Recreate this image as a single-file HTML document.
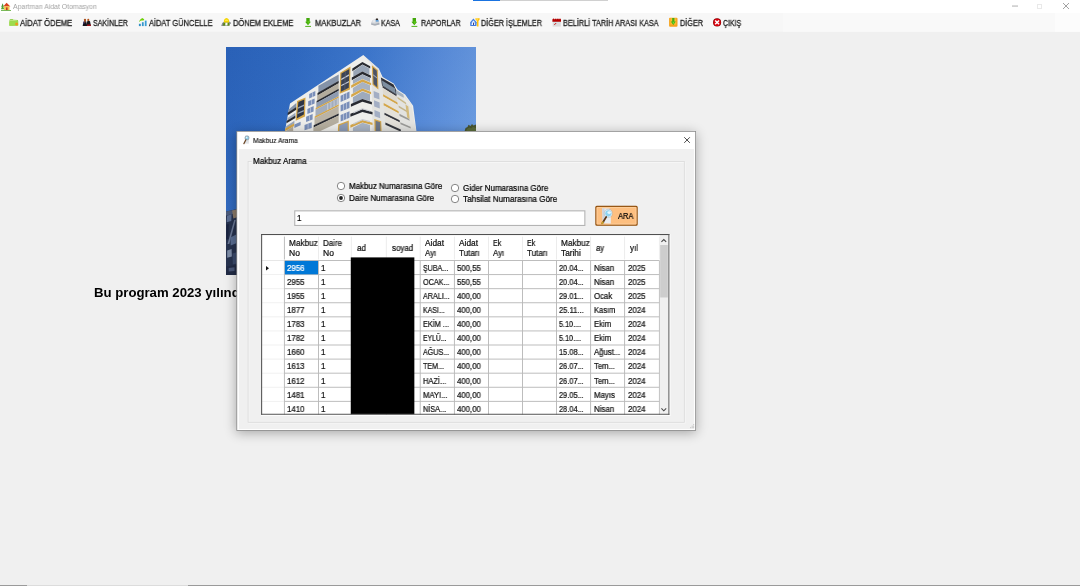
<!DOCTYPE html>
<html><head><meta charset="utf-8"><title>Apartman Aidat Otomasyon</title>
<style>
html,body{margin:0;padding:0;}
body{width:1080px;height:586px;overflow:hidden;background:#f0f0f0;position:relative;font-family:"Liberation Sans",sans-serif;}
.t{position:absolute;white-space:nowrap;transform-origin:0 50%;display:block;will-change:transform;}
.r{position:absolute;}
svg{position:absolute;overflow:visible;}
</style></head><body>
<div class="r" style="left:0.00px;top:0.00px;width:1080.00px;height:13.00px;background:#ffffff;"></div>
<div class="r" style="left:473.00px;top:0.00px;width:27.00px;height:1.00px;background:#1a73e0;"></div>
<div class="r" style="left:500.00px;top:0.00px;width:108.00px;height:1.00px;background:#d0d0d0;"></div>
<svg style="left:0px;top:13px" width="1080" height="19"><rect x="0.00" y="0.00" width="1080.00" height="18.70" fill="#f7f7f7"/></svg>
<svg style="left:783px;top:13px" width="297" height="19"><rect x="0.00" y="0.00" width="297.00" height="18.70" fill="#f9f9f9"/></svg>
<svg style="left:1055px;top:13px" width="25" height="19"><rect x="0.00" y="0.00" width="25.00" height="18.70" fill="#fcfcfc"/></svg>
<svg style="left:1px;top:2px" width="10" height="9" viewBox="0 0 10 9">
<path d="M0.3 5 L1.6 1.2 L2.8 4.6 Z" fill="#3f8f2a"/>
<path d="M0 7.2 L1.6 3 L3.2 7.2 Z" fill="#4ea535"/>
<path d="M2.2 4.6 L5.6 0.8 L9.4 4.6 Z" fill="#d9401e"/>
<rect x="3.1" y="4.3" width="5.4" height="4" fill="#f2c24a"/>
<rect x="5" y="5.4" width="1.6" height="2.9" fill="#c0392b"/>
<rect x="0" y="8" width="10" height="0.9" fill="#6bb34a"/>
</svg>
<span class="t" style="left:13.10px;top:3px;font-size:7.00px;line-height:7px;color:#a3a3a3;transform:scaleX(0.9790);">Apartman Aidat Otomasyon</span>
<svg style="left:1012px;top:5px" width="6" height="2"><rect x="0.00" y="0.60" width="6.00" height="0.90" fill="#a6a6a6"/></svg>
<div class="r" style="left:1037.30px;top:3.60px;width:5.20px;height:5.20px;background:transparent;border:0.7px solid #e9e9e9;box-sizing:border-box;"></div>
<svg style="left:1063px;top:3px" width="6" height="6" viewBox="0 0 6 6"><path d="M0 0L6 6M6 0L0 6" stroke="#8c8c8c" stroke-width="0.8" fill="none"/></svg>
<span class="t" style="left:20.10px;top:18px;font-size:8.30px;line-height:10px;color:#1c1c1c;transform:scaleX(0.9261);-webkit-text-stroke:0.28px currentColor;">AİDAT ÖDEME</span>
<span class="t" style="left:93.25px;top:18px;font-size:8.30px;line-height:10px;color:#1c1c1c;transform:scaleX(0.8513);-webkit-text-stroke:0.28px currentColor;">SAKİNLER</span>
<span class="t" style="left:148.50px;top:18px;font-size:8.30px;line-height:10px;color:#1c1c1c;transform:scaleX(0.8978);-webkit-text-stroke:0.28px currentColor;">AİDAT GÜNCELLE</span>
<span class="t" style="left:233.25px;top:18px;font-size:8.30px;line-height:10px;color:#1c1c1c;transform:scaleX(0.9024);-webkit-text-stroke:0.28px currentColor;">DÖNEM EKLEME</span>
<span class="t" style="left:314.50px;top:18px;font-size:8.30px;line-height:10px;color:#1c1c1c;transform:scaleX(0.9067);-webkit-text-stroke:0.28px currentColor;">MAKBUZLAR</span>
<span class="t" style="left:381.40px;top:18px;font-size:8.30px;line-height:10px;color:#1c1c1c;transform:scaleX(0.8557);-webkit-text-stroke:0.28px currentColor;">KASA</span>
<span class="t" style="left:421.00px;top:18px;font-size:8.30px;line-height:10px;color:#1c1c1c;transform:scaleX(0.8694);-webkit-text-stroke:0.28px currentColor;">RAPORLAR</span>
<span class="t" style="left:481.40px;top:18px;font-size:8.30px;line-height:10px;color:#1c1c1c;transform:scaleX(0.8751);-webkit-text-stroke:0.28px currentColor;">DİĞER İŞLEMLER</span>
<span class="t" style="left:563.25px;top:18px;font-size:8.30px;line-height:10px;color:#1c1c1c;transform:scaleX(0.8806);-webkit-text-stroke:0.28px currentColor;">BELİRLİ TARİH ARASI KASA</span>
<span class="t" style="left:679.50px;top:18px;font-size:8.30px;line-height:10px;color:#1c1c1c;transform:scaleX(0.8788);-webkit-text-stroke:0.28px currentColor;">DİĞER</span>
<span class="t" style="left:723.25px;top:18px;font-size:8.30px;line-height:10px;color:#1c1c1c;transform:scaleX(0.8349);-webkit-text-stroke:0.28px currentColor;">ÇIKIŞ</span>
<svg style="left:8px;top:17px" width="12" height="11" viewBox="8 17 12 11">
<path d="M9.5 20.2 L9.9 19.2 L12.6 19 L13.2 19.8 L18 19.9 L18.2 25.4 L9.4 25.7 Z" fill="#86cc3a"/>
<path d="M9.3 21.4 L18.2 21 L18.2 25.4 L9.4 25.7 Z" fill="#9ddc4c"/>
<path d="M10 20 L13 19.7 L17.6 20.4 L17.6 21 L10 21.3Z" fill="#b9e67a"/>
<circle cx="16.6" cy="24.1" r="1.5" fill="#ea9a1e"/></svg>
<svg style="left:81px;top:17px" width="12" height="11" viewBox="81 17 12 11">
<path d="M82.6 25.9 L83.6 21.6 Q85 20.6 86.3 21.6 L87.2 25.9 Z" fill="#14141c"/>
<path d="M83 23.2 L83.8 21.4 L84.8 21.6 L84.2 24 Z" fill="#34308a" opacity="0.8"/>
<path d="M86.4 25.9 L87.2 21.2 Q88.6 20.2 90 21.2 L91 25.9 Z" fill="#1a1a1e"/>
<path d="M86.9 25.9 L87.2 24.4 L90.7 24.4 L91 25.9 Z" fill="#a3121a"/>
<ellipse cx="85" cy="20" rx="1.15" ry="1.3" fill="#a8501e"/>
<ellipse cx="88.3" cy="19.9" rx="1.05" ry="1.2" fill="#b4541c"/>
<path d="M84.3 21.2 L85.6 21.2 L85 23.4Z" fill="#c05a20"/></svg>
<svg style="left:137px;top:16px" width="12" height="12" viewBox="137 16 12 12">
<rect x="138.9" y="23.8" width="1.9" height="2.3" fill="#2f8fc4"/>
<rect x="141.9" y="22.2" width="1.8" height="3.9" fill="#3497cc"/>
<rect x="144.8" y="20.6" width="1.8" height="5.5" fill="#3a9ed4"/>
<path d="M139 21.5 Q140 19 142.2 18 L144.3 19.2 L143.6 20.6 L142 20.6 Q140.6 20.6 139.4 21.7 Z" fill="#6fd10a"/></svg>
<svg style="left:220px;top:16px" width="13" height="12" viewBox="220 16 13 12">
<path d="M221.2 26 Q221.6 22.6 224.4 21.6 L229 21.6 Q231 22 231.2 23.6 L229.8 24 L228.6 26 Z" fill="#8a8d90"/>
<path d="M222.8 25.4 L223.6 22.8 L228.8 22.8 L230 25.4 Z" fill="#5c8a14"/>
<path d="M225.4 22.6 L227.6 22.6 L227.4 25.6 L225.2 25.6Z" fill="#f8f8f8"/>
<path d="M223.8 22.6 Q223.6 18.4 226.5 18 Q229.4 18.4 229.2 22.6 Z" fill="#f4d400"/>
<path d="M225 20.2 Q226.5 18.8 228 20.2 L228 21 L225 21Z" fill="#ffe94a"/></svg>
<svg style="left:304px;top:16px" width="9" height="12" viewBox="304 16 9 12"><g transform="translate(0,0)">
<path d="M306.3 18 L309.7 18 L309.7 21.8 L310.9 21.8 L308 25.3 L305.1 21.8 L306.3 21.8 Z" fill="#43a80c"/>
<path d="M307.2 21 L309.4 21 L309.4 22.4 L308 24.4 Z" fill="#5fce14" opacity="0.8"/>
<rect x="305.2" y="25.9" width="5.8" height="0.95" fill="#4aae12"/></g></svg>
<svg style="left:410px;top:16px" width="9" height="12" viewBox="410 16 9 12"><g transform="translate(106.3,0)">
<path d="M306.3 18 L309.7 18 L309.7 21.8 L310.9 21.8 L308 25.3 L305.1 21.8 L306.3 21.8 Z" fill="#43a80c"/>
<path d="M307.2 21 L309.4 21 L309.4 22.4 L308 24.4 Z" fill="#5fce14" opacity="0.8"/>
<rect x="305.2" y="25.9" width="5.8" height="0.95" fill="#4aae12"/></g></svg>
<svg style="left:369px;top:16px" width="13" height="12" viewBox="369 16 13 12">
<path d="M371 23 L372.6 20 L375.8 19.2 L379.2 21 L379.6 24.6 L375 25.7 L371.2 24.8 Z" fill="#cdd1d7"/>
<path d="M371.4 23.2 L375 24 L379.2 22.8 L379.5 24.5 L375 25.6 L371.3 24.8Z" fill="#a9aeb6"/>
<path d="M372.4 20.6 L375 19.6 L375.6 22.4 L372.6 22.6Z" fill="#e6e8ec"/>
<rect x="375.8" y="18.5" width="2.3" height="1.5" rx="0.5" fill="#2a1c14"/>
<rect x="375.8" y="19.9" width="2.8" height="1.7" fill="#5b9bd5"/></svg>
<svg style="left:469px;top:16px" width="13" height="13" viewBox="469 16 13 13">
<path d="M473.4 18.6 L476.7 22.2 L476.4 25.9 L470.3 25.9 L470.2 22.2 Z" fill="#3d78dc"/>
<path d="M473.4 19.6 L475.8 22.4 L475.6 25.1 L471.1 25.1 L471 22.4 Z" fill="#5a92ea"/>
<path d="M472.6 21.4 L474 20.4 L474.6 22.6 L475 25 L471.6 25 L472 22.8Z" fill="#f4f8ff"/>
<rect x="473" y="22.6" width="0.9" height="2.4" fill="#2a2a7a"/>
<path d="M475.4 18.3 L479.7 18.3 L479.6 19.4 L478.5 21 L478.5 26.5 L476.9 26.5 L476.9 21 L475.5 19.4 Z" fill="#ffc20a"/>
<path d="M475.8 18.6 L478 18.6 L477.4 20.4 Z" fill="#ffe46a"/></svg>
<svg style="left:551px;top:16px" width="12" height="13" viewBox="551 16 12 13">
<rect x="552.7" y="21" width="8.1" height="5.6" fill="#dcdcdc"/>
<rect x="552.7" y="21.6" width="8.1" height="0.8" fill="#cfe6ea"/>
<path d="M552.4 21.8 L552.4 19.4 Q553.6 17.4 554.8 19.4 Q556 17.4 556.8 19.4 Q558 17.4 559 19.4 Q560 17.4 561 19.4 L561 21.8 Z" fill="#b30000"/>
<path d="M554.2 24.6 Q555.6 24.4 556 23 " stroke="#cc2a2a" stroke-width="1" fill="none"/></svg>
<svg style="left:668px;top:16px" width="11" height="13" viewBox="668 16 11 13">
<rect x="669.1" y="17.8" width="8.4" height="8.9" rx="0.9" fill="#f6a21a"/>
<rect x="670.4" y="18.2" width="5.8" height="6.4" fill="#ffc43c" opacity="0.75"/>
<path d="M672.2 18.1 L674.4 18.1 L674.4 21.6 L675.8 21.6 L673.3 24.9 L670.8 21.6 L672.2 21.6 Z" fill="#3fae14"/>
<path d="M672.4 21.8 L674.6 21.8 L673.3 24.2Z" fill="#6ee02a"/></svg>
<svg style="left:711px;top:16px" width="12" height="13" viewBox="711 16 12 13">
<circle cx="717.1" cy="22.4" r="4.05" fill="#7e0a0a"/>
<circle cx="717.1" cy="22.4" r="3.6" fill="#d8000c"/>
<path d="M715.7 21L718.5 23.8M718.5 21L715.7 23.8" stroke="#fff" stroke-width="1.5" stroke-linecap="square"/></svg>
<div class="r" style="left:226px;top:46.5px;width:250px;height:228px;overflow:hidden;background:linear-gradient(100deg,#2b63b9 0%,#316bc1 25%,#3f79cd 50%,#5b8eda 75%,#74a3e3 100%);">
<div class="r" style="left:0;top:0;width:250px;height:228px;background:linear-gradient(180deg,rgba(20,60,150,0.06) 0%,rgba(0,0,0,0) 45%,rgba(120,160,230,0.12) 100%);"></div>
<svg style="left:0;top:0;filter:blur(0.4px)" width="250" height="228" viewBox="226 46.5 250 228"><polygon points="363.3,54.6 378.9,68.2 382.6,76.4 393.7,83.0 397.7,89.3 405.1,94.1 413.1,105.3 417.0,134.9 284.1,134.9 290.0,103.0" fill="#eeeeeb"/><polygon points="363.1,54.9 378.5,68.2 381.3,76.6 393.2,83.6 396.0,89.2 403.7,94.1 411.4,103.9 416.7,134.0 372.5,134.0 371.5,64.0" fill="#e3e3e0"/><polygon points="288.3,109.2 296.3,102.4 296.3,106.7 288.3,112.3" fill="#8593a8"/><polygon points="287.7,112.3 296.3,106.5 296.3,109.2 287.7,114.7" fill="#282a31"/><polygon points="287.3,117.8 295.4,112.3 295.4,115.3 287.3,120.5" fill="#9aa6b8"/><polygon points="286.5,120.5 295.4,115.1 295.4,117.5 286.5,122.7" fill="#282a31"/><polygon points="286.1,125.8 294.4,120.2 294.4,123.0 286.1,128.2" fill="#9aa6b8"/><polygon points="285.2,127.9 294.2,122.7 294.2,125.4 285.2,130.7" fill="#d4a648"/><polygon points="285.6,130.7 293.2,125.8 293.2,133.8 285.6,133.8" fill="#b3ac9d"/><polygon points="297.1,100.6 305.5,96.9 305.0,115.9 295.7,120.2" fill="#d4a648"/><polygon points="298.4,101.6 304.3,98.9 303.8,114.1 296.9,117.8" fill="#2e3545"/><polygon points="298.1,106.7 304.0,104.0 304.0,105.5 298.1,108.2" fill="#9aa6b8"/><polygon points="297.6,112.3 303.8,109.4 303.8,110.9 297.6,113.6" fill="#9aa6b8"/><polygon points="309.2,93.4 315.3,90.5 315.3,95.2 309.2,97.9" fill="#7a8fb9"/><polygon points="312.0,92.0 312.5,91.8 312.5,96.4 312.0,96.5" fill="#dfe4ee"/><polygon points="308.2,100.8 314.6,97.9 314.6,103.0 308.2,105.7" fill="#7a8fb9"/><polygon points="311.2,99.3 311.7,99.2 311.7,104.3 311.2,104.4" fill="#dfe4ee"/><polygon points="307.4,108.4 313.6,105.6 313.6,110.9 307.4,113.6" fill="#7a8fb9"/><polygon points="310.2,107.0 310.7,106.9 310.7,112.1 310.2,112.3" fill="#dfe4ee"/><polygon points="306.1,116.3 312.6,113.6 312.6,119.0 306.1,121.5" fill="#7a8fb9"/><polygon points="309.1,115.0 309.6,114.8 309.6,120.1 309.1,120.2" fill="#dfe4ee"/><polygon points="304.5,124.4 311.7,121.7 311.7,127.4 304.5,129.8" fill="#7a8fb9"/><polygon points="307.8,123.1 308.3,123.0 308.3,128.5 307.8,128.6" fill="#dfe4ee"/><polygon points="294.4,123.9 300.6,121.2 300.6,124.7 294.4,127.4" fill="#7a8fb9"/><polygon points="318.4,85.2 338.7,74.1 338.7,80.3 318.4,92.6" fill="#8593a8"/><polygon points="317.5,92.6 338.7,80.3 338.7,82.7 317.5,95.0" fill="#282a31"/><polygon points="317.2,95.0 338.7,82.7 338.7,88.3 317.2,100.6" fill="#b3ac9d"/><polygon points="316.6,100.6 338.7,88.3 338.7,90.2 316.6,102.5" fill="#282a31"/><polygon points="316.3,102.5 338.7,90.2 338.7,95.7 316.3,107.6" fill="#8e9bb0"/><polygon points="315.7,107.6 338.7,95.7 338.7,97.3 315.7,109.2" fill="#d4a648"/><polygon points="315.5,109.2 338.7,97.3 338.7,103.8 315.5,116.1" fill="#a3adbd"/><polygon points="314.7,116.1 338.7,103.8 338.7,105.5 314.7,117.8" fill="#d4a648"/><polygon points="314.5,117.8 338.7,105.5 338.7,112.9 314.5,124.7" fill="#bab3a5"/><polygon points="313.7,124.7 338.7,112.9 338.7,115.0 313.7,127.1" fill="#282a31"/><polygon points="313.4,127.1 338.7,115.0 338.7,122.1 313.4,133.8" fill="#b5ae9f"/><polygon points="327.6,103.1 328.1,102.9 328.1,109.5 327.6,109.8" fill="#e8ebf0"/><polygon points="330.7,101.5 331.2,101.3 331.2,107.8 330.7,108.1" fill="#e8ebf0"/><polygon points="333.8,99.9 334.3,99.7 334.3,106.2 333.8,106.4" fill="#e8ebf0"/><polygon points="336.9,98.3 337.4,98.1 337.4,104.5 336.9,104.8" fill="#e8ebf0"/><polygon points="340.2,72.3 350.5,66.1 350.0,88.9 339.7,93.2" fill="#d4a648"/><polygon points="341.4,73.0 349.3,68.4 348.8,87.3 340.9,91.2" fill="#3b4354"/><polygon points="341.2,78.2 349.0,73.8 349.0,75.2 341.2,79.7" fill="#c9ced8"/><polygon points="341.2,84.6 349.0,80.4 349.0,81.8 341.2,85.8" fill="#c9ced8"/><polygon points="344.9,70.8 345.6,70.5 345.2,89.3 344.5,89.6" fill="#596173"/><polygon points="340.6,95.2 349.5,91.0 349.5,97.6 340.6,101.6" fill="#7a8fb9"/><polygon points="343.4,93.9 343.9,93.7 343.9,100.1 343.4,100.3" fill="#e4e8f0"/><polygon points="346.3,92.6 346.8,92.3 346.8,98.7 346.3,99.0" fill="#e4e8f0"/><polygon points="340.6,104.8 349.5,100.8 349.5,107.5 340.6,111.1" fill="#7a8fb9"/><polygon points="343.4,103.5 343.9,103.3 343.9,109.7 343.4,109.9" fill="#e4e8f0"/><polygon points="346.3,102.2 346.8,101.9 346.8,108.3 346.3,108.5" fill="#e4e8f0"/><polygon points="340.6,114.6 349.5,110.7 349.5,117.3 340.6,121.0" fill="#7a8fb9"/><polygon points="343.4,113.3 343.9,113.1 343.9,119.5 343.4,119.7" fill="#e4e8f0"/><polygon points="346.3,112.0 346.8,111.8 346.8,118.2 346.3,118.4" fill="#e4e8f0"/><polygon points="338.2,123.9 348.8,120.0 348.8,133.8 337.7,133.8" fill="#d4a648"/><polygon points="339.4,124.9 347.6,121.8 347.6,133.8 339.2,133.8" fill="#8d9cb8"/><polygon points="352.3,67.9 362.4,61.5 370.2,65.7 370.2,67.9 362.4,64.0 352.3,70.7" fill="#282a31"/><polygon points="353.3,70.7 362.4,64.3 369.4,67.9 369.4,74.1 362.4,71.0 353.3,76.3" fill="#99a5b6"/><polygon points="351.8,76.9 362.4,71.0 370.8,74.9 370.8,77.4 362.4,73.8 351.8,79.7" fill="#282a31"/><polygon points="352.9,79.7 362.4,74.1 370.0,77.4 370.0,81.4 362.4,78.6 352.9,83.6" fill="#a2adbd"/><polygon points="351.2,84.7 362.4,78.8 371.1,82.5 371.1,84.7 362.4,81.4 351.2,87.5" fill="#d4a648"/><polygon points="352.9,87.5 362.4,81.6 370.0,84.7 370.0,90.6 362.4,88.1 352.9,93.1" fill="#a8b2c1"/><polygon points="351.2,94.0 362.4,88.1 371.1,91.4 371.1,93.7 362.4,90.6 351.2,96.8" fill="#d4a648"/><polygon points="352.9,96.8 362.4,90.9 370.0,93.7 370.0,100.4 362.4,98.4 352.9,103.2" fill="#9eaabb"/><polygon points="350.9,103.5 362.4,98.4 371.9,101.5 371.9,104.0 362.4,101.2 350.9,106.3" fill="#282a31"/><polygon points="350.4,113.3 362.4,108.8 372.5,111.6 372.5,114.1 362.4,111.6 350.4,116.3" fill="#282a31"/><polygon points="353.4,111.6 362.4,107.7 370.0,109.9 370.0,111.0 362.4,108.8 353.4,113.0" fill="#c9ccd2"/><polygon points="350.4,124.5 362.4,119.4 372.5,122.2 372.5,124.5 362.4,121.9 350.4,127.3" fill="#d4a648"/><polygon points="352.9,127.3 362.4,122.2 370.0,124.5 370.0,134.0 352.9,134.0" fill="#a9b4c4"/><polygon points="353.4,122.8 362.4,118.6 370.0,120.5 370.0,121.7 362.4,119.7 353.4,124.2" fill="#c9ccd2"/><polygon points="371.9,64.7 377.8,69.6 378.4,88.9 372.5,84.3" fill="#d4a648"/><polygon points="373.0,67.1 376.8,70.3 377.2,86.7 373.5,83.6" fill="#4a5366"/><polygon points="373.2,73.8 377.1,76.9 377.1,78.0 373.2,74.9" fill="#aab2c0"/><polygon points="373.6,90.6 379.2,92.8 379.5,98.9 373.9,96.9" fill="#a3aec4"/><polygon points="374.0,99.8 379.6,102.1 379.8,108.0 374.2,106.0" fill="#a3aec4"/><polygon points="374.4,109.5 379.9,111.7 380.2,117.7 374.6,115.8" fill="#a3aec4"/><polygon points="374.3,118.6 381.2,120.8 381.7,134.0 374.7,134.0" fill="#d4a648"/><polygon points="375.6,120.3 380.2,121.8 380.6,134.0 375.8,134.0" fill="#6e7787"/><polygon points="380.9,76.9 393.5,83.9 396.3,89.9 396.6,94.5 382.0,85.0" fill="#2e3038"/><polygon points="382.0,80.1 394.9,87.8 396.0,93.7 382.6,85.3" fill="#7e8fa0"/><polygon points="382.6,85.3 396.3,94.0 396.6,95.9 382.6,87.2" fill="#3a3c44"/><polygon points="382.6,87.2 396.6,95.9 397.1,102.1 383.1,93.7" fill="#dedad0"/><polygon points="383.1,93.7 397.4,102.1 397.7,104.3 383.1,95.9" fill="#d4a648"/><polygon points="383.1,95.9 397.7,104.3 398.2,111.0 383.7,102.9" fill="#e6e2d8"/><polygon points="383.7,102.6 398.5,110.8 398.8,113.0 383.7,104.9" fill="#d4a648"/><polygon points="384.0,104.9 398.8,113.0 399.4,120.0 384.5,112.4" fill="#e4e1d9"/><polygon points="384.5,112.2 399.6,119.7 399.9,121.9 384.5,114.4" fill="#34363d"/><polygon points="384.8,114.4 399.9,121.9 400.5,129.2 385.4,122.2" fill="#e2dfd8"/><polygon points="385.4,121.9 400.8,128.9 401.0,131.2 385.4,124.2" fill="#34363d"/><polygon points="396.0,89.5 403.3,94.0 404.1,97.6 396.6,93.4" fill="#a7b3bf"/><polygon points="397.4,96.2 405.8,102.1 406.3,104.0 397.7,98.3" fill="#c9b98a"/><polygon points="398.5,104.9 407.7,110.5 408.3,112.4 398.8,107.0" fill="#c3b48a"/><polygon points="399.4,113.3 409.1,118.3 409.7,120.3 399.6,115.4" fill="#9b9b98"/><polygon points="400.2,121.7 410.5,126.3 410.8,128.1 400.5,123.8" fill="#9b9b98"/><polygon points="405.5,103.9 408.3,106.0 409.7,118.6 407.2,116.9" fill="#d3bb7c"/><polygon points="403.3,96.2 410.8,104.3 411.7,107.4 403.8,99.3" fill="#f0efe9" opacity="0.6"/><polygon points="225.5,211.2 237.1,208.6 263.5,208.6 263.5,274.4 225.5,274.4" fill="#27334f"/><polygon points="225.5,211.2 237.1,208.6 237.1,212.4 225.5,215.3" fill="#4d5c7c"/><polygon points="232.2,210.1 237.1,208.9 237.1,216.7 233.3,217.9" fill="#8c7b69"/><polygon points="227.0,215.3 231.6,213.8 231.3,220.4 226.7,221.8" fill="#5c6f94"/><polygon points="227.5,243.6 229.3,243.6 235.7,219.6 234.2,219.6" fill="#6d7b98"/><polygon points="230.4,237.0 236.2,234.1 236.2,242.8 230.7,245.0" fill="#5a6e92"/><polygon points="227.2,250.1 231.6,248.6 231.9,255.9 227.2,257.3" fill="#7f8ea8"/><polygon points="226.4,224.0 228.7,223.4 228.4,238.5 226.1,239.2" fill="#1a2440"/><polygon points="232.5,253.0 236.8,251.8 236.8,263.1 232.8,264.0" fill="#3c4c6e"/><polygon points="225.8,266.0 237.1,264.6 237.1,274.4 225.8,274.4" fill="#222c46"/><polygon points="228.7,267.5 234.5,266.7 234.5,270.4 228.7,271.1" fill="#4a5878"/><polygon points="464.5,131.0 465.5,127.5 467.5,126.5 468.5,124.2 470.5,125.5 472.0,123.6 473.5,125.0 476.0,124.0 476.0,131.0" fill="#47542f"/><polygon points="466.0,131.0 467.0,128.5 469.5,127.0 471.0,128.0 473.0,126.5 476.0,127.5 476.0,131.0" fill="#5a6a3a"/></svg>
</div>
<div class="r" style="left:90px;top:280px;width:147px;height:26px;overflow:hidden">
<span class="t" style="left:4.40px;top:5px;font-size:12.90px;line-height:15px;color:#000;font-weight:bold;transform:scaleX(1.0220);">Bu program 2023 yılında</span>
</div>
<div class="r" style="left:237px;top:132px;width:458px;height:298px;box-shadow:0 2px 11px 1px rgba(0,0,0,0.31);background:#fff;"></div>
<svg style="left:236px;top:131px" width="460" height="300"><rect x="0.40" y="0.00" width="459.60" height="299.80" fill="#8c8c8c"/></svg>
<svg style="left:237px;top:131px" width="459" height="299"><rect x="0.20" y="0.80" width="458.00" height="298.20" fill="#ffffff"/></svg>
<svg style="left:238px;top:149px" width="456" height="281"><rect x="0.90" y="0.00" width="455.00" height="280.10" fill="#f0f0f0"/></svg>
<svg style="left:242.5px;top:134.8px" width="7" height="10" viewBox="0 0 7 10">
<path d="M2 0.4 L6.2 0.8 L5.8 8.8 L1.6 8.4 Z" fill="#dfe2e6"/>
<circle cx="4" cy="2.9" r="2" fill="#8fd0ee" stroke="#8a959e" stroke-width="0.7"/>
<circle cx="3.6" cy="2.5" r="0.8" fill="#e4f6fd"/>
<path d="M2.9 4.8 L0.9 8.6" stroke="#6a4424" stroke-width="1.2" stroke-linecap="round"/>
</svg>
<span class="t" style="left:253.30px;top:137px;font-size:7.10px;line-height:8px;color:#0a0a0a;transform:scaleX(0.9461);-webkit-text-stroke:0.12px currentColor;">Makbuz Arama</span>
<svg style="left:684px;top:136.8px" width="6.1" height="6.1" viewBox="0 0 6.1 6.1"><path d="M0.25 0.25L5.85 5.85M5.85 0.25L0.25 5.85" stroke="#1e1e1e" stroke-width="0.8" fill="none"/></svg>
<svg style="left:247px;top:161px" width="439" height="263"><rect x="1.9" y="1.3" width="436.2" height="260.8" fill="none" stroke="#fafafa" stroke-width="0.6"/><rect x="1.1" y="0.5" width="436.2" height="260.8" fill="none" stroke="#dbdbdb" stroke-width="0.8"/></svg>
<svg style="left:251px;top:157px" width="58" height="9"><rect x="0.60" y="0.00" width="57.00" height="9.00" fill="#f0f0f0"/></svg>
<span class="t" style="left:253.20px;top:156px;font-size:8.30px;line-height:10px;color:#000;transform:scaleX(0.9683);-webkit-text-stroke:0.22px currentColor;">Makbuz Arama</span>
<svg style="left:336.00px;top:181.20px" width="10" height="10"><circle cx="5" cy="5" r="3.7" fill="#fff" stroke="#555" stroke-width="0.7"/></svg>
<span class="t" style="left:348.50px;top:181px;font-size:8.30px;line-height:10px;color:#000;transform:scaleX(0.9575);-webkit-text-stroke:0.22px currentColor;">Makbuz Numarasına Göre</span>
<svg style="left:336.00px;top:192.90px" width="10" height="10"><circle cx="5" cy="5" r="3.7" fill="#fff" stroke="#555" stroke-width="0.7"/><circle cx="5" cy="5" r="1.9" fill="#222"/></svg>
<span class="t" style="left:348.50px;top:193px;font-size:8.30px;line-height:10px;color:#000;transform:scaleX(0.9659);-webkit-text-stroke:0.22px currentColor;">Daire Numarasına Göre</span>
<svg style="left:450.40px;top:182.70px" width="10" height="10"><circle cx="5" cy="5" r="3.7" fill="#fff" stroke="#555" stroke-width="0.7"/></svg>
<span class="t" style="left:463.20px;top:183px;font-size:8.30px;line-height:10px;color:#000;transform:scaleX(0.9620);-webkit-text-stroke:0.22px currentColor;">Gider Numarasına Göre</span>
<svg style="left:450.40px;top:193.90px" width="10" height="10"><circle cx="5" cy="5" r="3.7" fill="#fff" stroke="#555" stroke-width="0.7"/></svg>
<span class="t" style="left:463.20px;top:194px;font-size:8.30px;line-height:10px;color:#000;transform:scaleX(0.9770);-webkit-text-stroke:0.22px currentColor;">Tahsilat Numarasına Göre</span>
<svg style="left:294px;top:210px" width="292" height="17"><rect x="0.75" y="0.85" width="290.1" height="14.6" fill="#fff" stroke="#b4b4b4" stroke-width="1.1"/></svg>
<span class="t" style="left:296.50px;top:213px;font-size:8.30px;line-height:10px;color:#000;transform:scaleX(0.9547);-webkit-text-stroke:0.22px currentColor;">1</span>
<svg style="left:594px;top:205px" width="45" height="22"><rect x="1.9" y="1.3" width="41.2" height="18.9" rx="0.9" fill="#fdbf80" stroke="#8f4d0a" stroke-width="1.2"/><rect x="3.0" y="2.4" width="39.0" height="16.7" rx="0.4" fill="none" stroke="#ffd6a6" stroke-width="0.7"/></svg>
<svg style="left:600px;top:207px" width="14" height="18" viewBox="600 207 14 18">
<path d="M602.1 208.2 L609.4 208.6 L611 210.2 L610.8 223.5 L602.8 223.2 Z" fill="#e9ecf0"/>
<path d="M602.1 208.2 L604.5 208.3 L605 223.3 L602.8 223.2 Z" fill="#cfd4dc"/>
<path d="M609.4 208.6 L611 210.2 L609.3 210.3 Z" fill="#b9bfc8"/>
<circle cx="608.3" cy="213.4" r="3.6" fill="#8fd4f2" stroke="#dfe9ef" stroke-width="0.9"/>
<circle cx="608.3" cy="213.4" r="4.1" fill="none" stroke="#9aa7b2" stroke-width="0.35"/>
<ellipse cx="609.2" cy="212.6" rx="1.8" ry="1.3" fill="#e6f7fd"/>
<path d="M606.2 217 L602.3 223.2" stroke="#5c3513" stroke-width="1.7" stroke-linecap="round"/>
<path d="M602.9 222.3 L602.1 223.6" stroke="#c9a227" stroke-width="1.8" stroke-linecap="round"/>
</svg>
<span class="t" style="left:617.80px;top:211px;font-size:8.30px;line-height:10px;color:#000;transform:scaleX(0.9050);-webkit-text-stroke:0.22px currentColor;">ARA</span>
<svg style="left:261px;top:234px" width="410" height="182"><rect x="0.10" y="0.00" width="409.40" height="182.00" fill="#fdfdfd"/></svg>
<svg style="left:261px;top:234px" width="409" height="181"><rect x="0.10" y="0.00" width="408.30" height="180.80" fill="#fff"/></svg>
<svg style="left:0;top:0" width="680" height="420"><rect x="284.40" y="260.02" width="375.00" height="0.95" fill="#bababa"/><rect x="262.00" y="260.02" width="22.40" height="0.95" fill="#e6e6e6"/><rect x="284.40" y="274.11" width="375.00" height="0.95" fill="#bababa"/><rect x="262.00" y="274.11" width="22.40" height="0.95" fill="#f0f0f0"/><rect x="284.40" y="288.19" width="375.00" height="0.95" fill="#bababa"/><rect x="262.00" y="288.19" width="22.40" height="0.95" fill="#f0f0f0"/><rect x="284.40" y="302.28" width="375.00" height="0.95" fill="#bababa"/><rect x="262.00" y="302.28" width="22.40" height="0.95" fill="#f0f0f0"/><rect x="284.40" y="316.37" width="375.00" height="0.95" fill="#bababa"/><rect x="262.00" y="316.37" width="22.40" height="0.95" fill="#f0f0f0"/><rect x="284.40" y="330.45" width="375.00" height="0.95" fill="#bababa"/><rect x="262.00" y="330.45" width="22.40" height="0.95" fill="#f0f0f0"/><rect x="284.40" y="344.53" width="375.00" height="0.95" fill="#bababa"/><rect x="262.00" y="344.53" width="22.40" height="0.95" fill="#f0f0f0"/><rect x="284.40" y="358.62" width="375.00" height="0.95" fill="#bababa"/><rect x="262.00" y="358.62" width="22.40" height="0.95" fill="#f0f0f0"/><rect x="284.40" y="372.70" width="375.00" height="0.95" fill="#bababa"/><rect x="262.00" y="372.70" width="22.40" height="0.95" fill="#f0f0f0"/><rect x="284.40" y="386.79" width="375.00" height="0.95" fill="#bababa"/><rect x="262.00" y="386.79" width="22.40" height="0.95" fill="#f0f0f0"/><rect x="284.40" y="400.88" width="375.00" height="0.95" fill="#bababa"/><rect x="262.00" y="400.88" width="22.40" height="0.95" fill="#f0f0f0"/><rect x="283.92" y="260.50" width="0.95" height="154.30" fill="#bababa"/><rect x="283.92" y="236.60" width="0.95" height="22.90" fill="#bababa"/><rect x="318.02" y="260.50" width="0.95" height="154.30" fill="#bababa"/><rect x="318.02" y="236.60" width="0.95" height="22.90" fill="#ebebeb"/><rect x="350.82" y="260.50" width="0.95" height="154.30" fill="#bababa"/><rect x="350.82" y="236.60" width="0.95" height="22.90" fill="#ebebeb"/><rect x="385.82" y="260.50" width="0.95" height="154.30" fill="#bababa"/><rect x="385.82" y="236.60" width="0.95" height="22.90" fill="#ebebeb"/><rect x="419.72" y="260.50" width="0.95" height="154.30" fill="#bababa"/><rect x="419.72" y="236.60" width="0.95" height="22.90" fill="#ebebeb"/><rect x="453.92" y="260.50" width="0.95" height="154.30" fill="#bababa"/><rect x="453.92" y="236.60" width="0.95" height="22.90" fill="#ebebeb"/><rect x="488.02" y="260.50" width="0.95" height="154.30" fill="#bababa"/><rect x="488.02" y="236.60" width="0.95" height="22.90" fill="#ebebeb"/><rect x="522.02" y="260.50" width="0.95" height="154.30" fill="#bababa"/><rect x="522.02" y="236.60" width="0.95" height="22.90" fill="#ebebeb"/><rect x="556.02" y="260.50" width="0.95" height="154.30" fill="#bababa"/><rect x="556.02" y="236.60" width="0.95" height="22.90" fill="#ebebeb"/><rect x="590.12" y="260.50" width="0.95" height="154.30" fill="#bababa"/><rect x="590.12" y="236.60" width="0.95" height="22.90" fill="#ebebeb"/><rect x="624.12" y="260.50" width="0.95" height="154.30" fill="#bababa"/><rect x="624.12" y="236.60" width="0.95" height="22.90" fill="#ebebeb"/><rect x="658.92" y="260.50" width="0.95" height="154.30" fill="#bababa"/><rect x="658.92" y="236.60" width="0.95" height="22.90" fill="#ebebeb"/></svg>
<svg style="left:284px;top:260px" width="34" height="15"><rect x="0.90" y="0.95" width="33.10" height="13.35" fill="#0078d7"/></svg>
<span class="t" style="left:289.30px;top:238px;font-size:8.30px;line-height:10px;color:#111;transform:scaleX(0.9871);-webkit-text-stroke:0.22px currentColor;">Makbuz</span>
<span class="t" style="left:289.30px;top:248px;font-size:8.30px;line-height:10px;color:#111;transform:scaleX(1.0279);-webkit-text-stroke:0.22px currentColor;">No</span>
<span class="t" style="left:323.40px;top:238px;font-size:8.30px;line-height:10px;color:#111;transform:scaleX(0.9574);-webkit-text-stroke:0.22px currentColor;">Daire</span>
<span class="t" style="left:323.40px;top:248px;font-size:8.30px;line-height:10px;color:#111;transform:scaleX(1.0279);-webkit-text-stroke:0.22px currentColor;">No</span>
<span class="t" style="left:356.60px;top:243px;font-size:8.30px;line-height:10px;color:#111;transform:scaleX(0.9712);-webkit-text-stroke:0.22px currentColor;">ad</span>
<span class="t" style="left:391.60px;top:243px;font-size:8.30px;line-height:10px;color:#111;transform:scaleX(0.9558);-webkit-text-stroke:0.22px currentColor;">soyad</span>
<span class="t" style="left:425.10px;top:238px;font-size:8.30px;line-height:10px;color:#111;transform:scaleX(1.0038);-webkit-text-stroke:0.22px currentColor;">Aidat</span>
<span class="t" style="left:425.10px;top:248px;font-size:8.30px;line-height:10px;color:#111;transform:scaleX(0.9456);-webkit-text-stroke:0.22px currentColor;">Ayı</span>
<span class="t" style="left:459.30px;top:238px;font-size:8.30px;line-height:10px;color:#111;transform:scaleX(1.0038);-webkit-text-stroke:0.22px currentColor;">Aidat</span>
<span class="t" style="left:459.30px;top:248px;font-size:8.30px;line-height:10px;color:#111;transform:scaleX(0.9665);-webkit-text-stroke:0.22px currentColor;">Tutarı</span>
<span class="t" style="left:493.40px;top:238px;font-size:8.30px;line-height:10px;color:#111;transform:scaleX(0.8465);-webkit-text-stroke:0.22px currentColor;">Ek</span>
<span class="t" style="left:493.40px;top:248px;font-size:8.30px;line-height:10px;color:#111;transform:scaleX(0.9456);-webkit-text-stroke:0.22px currentColor;">Ayı</span>
<span class="t" style="left:527.40px;top:238px;font-size:8.30px;line-height:10px;color:#111;transform:scaleX(0.8465);-webkit-text-stroke:0.22px currentColor;">Ek</span>
<span class="t" style="left:527.40px;top:248px;font-size:8.30px;line-height:10px;color:#111;transform:scaleX(0.9665);-webkit-text-stroke:0.22px currentColor;">Tutarı</span>
<span class="t" style="left:561.40px;top:238px;font-size:8.30px;line-height:10px;color:#111;transform:scaleX(0.9871);-webkit-text-stroke:0.22px currentColor;">Makbuz</span>
<span class="t" style="left:561.40px;top:248px;font-size:8.30px;line-height:10px;color:#111;-webkit-text-stroke:0.22px currentColor;">Tarihi</span>
<span class="t" style="left:595.90px;top:243px;font-size:8.30px;line-height:10px;color:#111;transform:scaleX(0.9244);-webkit-text-stroke:0.22px currentColor;">ay</span>
<span class="t" style="left:629.90px;top:243px;font-size:8.30px;line-height:10px;color:#111;transform:scaleX(0.9523);-webkit-text-stroke:0.22px currentColor;">yıl</span>
<span class="t" style="left:287.30px;top:263px;font-size:8.30px;line-height:10px;color:#fff;transform:scaleX(0.9547);-webkit-text-stroke:0.22px currentColor;">2956</span>
<span class="t" style="left:321.40px;top:263px;font-size:8.30px;line-height:10px;color:#111;transform:scaleX(0.9547);-webkit-text-stroke:0.22px currentColor;">1</span>
<span class="t" style="left:423.10px;top:263px;font-size:8.30px;line-height:10px;color:#111;transform:scaleX(0.8549);-webkit-text-stroke:0.22px currentColor;">ŞUBA...</span>
<span class="t" style="left:457.30px;top:263px;font-size:8.30px;line-height:10px;color:#111;transform:scaleX(0.9378);-webkit-text-stroke:0.22px currentColor;">500,55</span>
<span class="t" style="left:559.40px;top:263px;font-size:8.30px;line-height:10px;color:#111;transform:scaleX(0.8927);-webkit-text-stroke:0.22px currentColor;">20.04...</span>
<span class="t" style="left:593.50px;top:263px;font-size:8.30px;line-height:10px;color:#111;transform:scaleX(0.9587);-webkit-text-stroke:0.22px currentColor;">Nisan</span>
<span class="t" style="left:627.50px;top:263px;font-size:8.30px;line-height:10px;color:#111;transform:scaleX(0.9547);-webkit-text-stroke:0.22px currentColor;">2025</span>
<span class="t" style="left:287.30px;top:277px;font-size:8.30px;line-height:10px;color:#111;transform:scaleX(0.9547);-webkit-text-stroke:0.22px currentColor;">2955</span>
<span class="t" style="left:321.40px;top:277px;font-size:8.30px;line-height:10px;color:#111;transform:scaleX(0.9547);-webkit-text-stroke:0.22px currentColor;">1</span>
<span class="t" style="left:423.10px;top:277px;font-size:8.30px;line-height:10px;color:#111;transform:scaleX(0.8726);-webkit-text-stroke:0.22px currentColor;">OCAK...</span>
<span class="t" style="left:457.30px;top:277px;font-size:8.30px;line-height:10px;color:#111;transform:scaleX(0.9378);-webkit-text-stroke:0.22px currentColor;">550,55</span>
<span class="t" style="left:559.40px;top:277px;font-size:8.30px;line-height:10px;color:#111;transform:scaleX(0.8927);-webkit-text-stroke:0.22px currentColor;">20.04...</span>
<span class="t" style="left:593.50px;top:277px;font-size:8.30px;line-height:10px;color:#111;transform:scaleX(0.9587);-webkit-text-stroke:0.22px currentColor;">Nisan</span>
<span class="t" style="left:627.50px;top:277px;font-size:8.30px;line-height:10px;color:#111;transform:scaleX(0.9547);-webkit-text-stroke:0.22px currentColor;">2025</span>
<span class="t" style="left:287.30px;top:291px;font-size:8.30px;line-height:10px;color:#111;transform:scaleX(0.9547);-webkit-text-stroke:0.22px currentColor;">1955</span>
<span class="t" style="left:321.40px;top:291px;font-size:8.30px;line-height:10px;color:#111;transform:scaleX(0.9547);-webkit-text-stroke:0.22px currentColor;">1</span>
<span class="t" style="left:423.10px;top:291px;font-size:8.30px;line-height:10px;color:#111;transform:scaleX(0.8667);-webkit-text-stroke:0.22px currentColor;">ARALI...</span>
<span class="t" style="left:457.30px;top:291px;font-size:8.30px;line-height:10px;color:#111;transform:scaleX(0.9378);-webkit-text-stroke:0.22px currentColor;">400,00</span>
<span class="t" style="left:559.40px;top:291px;font-size:8.30px;line-height:10px;color:#111;transform:scaleX(0.8927);-webkit-text-stroke:0.22px currentColor;">29.01...</span>
<span class="t" style="left:593.50px;top:291px;font-size:8.30px;line-height:10px;color:#111;transform:scaleX(0.9376);-webkit-text-stroke:0.22px currentColor;">Ocak</span>
<span class="t" style="left:627.50px;top:291px;font-size:8.30px;line-height:10px;color:#111;transform:scaleX(0.9547);-webkit-text-stroke:0.22px currentColor;">2025</span>
<span class="t" style="left:287.30px;top:305px;font-size:8.30px;line-height:10px;color:#111;transform:scaleX(0.9547);-webkit-text-stroke:0.22px currentColor;">1877</span>
<span class="t" style="left:321.40px;top:305px;font-size:8.30px;line-height:10px;color:#111;transform:scaleX(0.9547);-webkit-text-stroke:0.22px currentColor;">1</span>
<span class="t" style="left:423.10px;top:305px;font-size:8.30px;line-height:10px;color:#111;transform:scaleX(0.8461);-webkit-text-stroke:0.22px currentColor;">KASI...</span>
<span class="t" style="left:457.30px;top:305px;font-size:8.30px;line-height:10px;color:#111;transform:scaleX(0.9378);-webkit-text-stroke:0.22px currentColor;">400,00</span>
<span class="t" style="left:559.40px;top:305px;font-size:8.30px;line-height:10px;color:#111;transform:scaleX(0.9130);-webkit-text-stroke:0.22px currentColor;">25.11...</span>
<span class="t" style="left:593.50px;top:305px;font-size:8.30px;line-height:10px;color:#111;transform:scaleX(0.9091);-webkit-text-stroke:0.22px currentColor;">Kasım</span>
<span class="t" style="left:627.50px;top:305px;font-size:8.30px;line-height:10px;color:#111;transform:scaleX(0.9547);-webkit-text-stroke:0.22px currentColor;">2024</span>
<span class="t" style="left:287.30px;top:319px;font-size:8.30px;line-height:10px;color:#111;transform:scaleX(0.9547);-webkit-text-stroke:0.22px currentColor;">1783</span>
<span class="t" style="left:321.40px;top:319px;font-size:8.30px;line-height:10px;color:#111;transform:scaleX(0.9547);-webkit-text-stroke:0.22px currentColor;">1</span>
<span class="t" style="left:423.10px;top:319px;font-size:8.30px;line-height:10px;color:#111;transform:scaleX(0.8794);-webkit-text-stroke:0.22px currentColor;">EKİM ...</span>
<span class="t" style="left:457.30px;top:319px;font-size:8.30px;line-height:10px;color:#111;transform:scaleX(0.9378);-webkit-text-stroke:0.22px currentColor;">400,00</span>
<span class="t" style="left:559.40px;top:319px;font-size:8.30px;line-height:10px;color:#111;transform:scaleX(0.8702);-webkit-text-stroke:0.22px currentColor;">5.10....</span>
<span class="t" style="left:593.50px;top:319px;font-size:8.30px;line-height:10px;color:#111;transform:scaleX(0.9330);-webkit-text-stroke:0.22px currentColor;">Ekim</span>
<span class="t" style="left:627.50px;top:319px;font-size:8.30px;line-height:10px;color:#111;transform:scaleX(0.9547);-webkit-text-stroke:0.22px currentColor;">2024</span>
<span class="t" style="left:287.30px;top:333px;font-size:8.30px;line-height:10px;color:#111;transform:scaleX(0.9547);-webkit-text-stroke:0.22px currentColor;">1782</span>
<span class="t" style="left:321.40px;top:333px;font-size:8.30px;line-height:10px;color:#111;transform:scaleX(0.9547);-webkit-text-stroke:0.22px currentColor;">1</span>
<span class="t" style="left:423.10px;top:333px;font-size:8.30px;line-height:10px;color:#111;transform:scaleX(0.8197);-webkit-text-stroke:0.22px currentColor;">EYLÜ...</span>
<span class="t" style="left:457.30px;top:333px;font-size:8.30px;line-height:10px;color:#111;transform:scaleX(0.9378);-webkit-text-stroke:0.22px currentColor;">400,00</span>
<span class="t" style="left:559.40px;top:333px;font-size:8.30px;line-height:10px;color:#111;transform:scaleX(0.8702);-webkit-text-stroke:0.22px currentColor;">5.10....</span>
<span class="t" style="left:593.50px;top:333px;font-size:8.30px;line-height:10px;color:#111;transform:scaleX(0.9330);-webkit-text-stroke:0.22px currentColor;">Ekim</span>
<span class="t" style="left:627.50px;top:333px;font-size:8.30px;line-height:10px;color:#111;transform:scaleX(0.9547);-webkit-text-stroke:0.22px currentColor;">2024</span>
<span class="t" style="left:287.30px;top:347px;font-size:8.30px;line-height:10px;color:#111;transform:scaleX(0.9547);-webkit-text-stroke:0.22px currentColor;">1660</span>
<span class="t" style="left:321.40px;top:347px;font-size:8.30px;line-height:10px;color:#111;transform:scaleX(0.9547);-webkit-text-stroke:0.22px currentColor;">1</span>
<span class="t" style="left:423.10px;top:347px;font-size:8.30px;line-height:10px;color:#111;transform:scaleX(0.8596);-webkit-text-stroke:0.22px currentColor;">AĞUS...</span>
<span class="t" style="left:457.30px;top:347px;font-size:8.30px;line-height:10px;color:#111;transform:scaleX(0.9378);-webkit-text-stroke:0.22px currentColor;">400,00</span>
<span class="t" style="left:559.40px;top:347px;font-size:8.30px;line-height:10px;color:#111;transform:scaleX(0.8927);-webkit-text-stroke:0.22px currentColor;">15.08...</span>
<span class="t" style="left:593.50px;top:347px;font-size:8.30px;line-height:10px;color:#111;transform:scaleX(0.9329);-webkit-text-stroke:0.22px currentColor;">Ağust...</span>
<span class="t" style="left:627.50px;top:347px;font-size:8.30px;line-height:10px;color:#111;transform:scaleX(0.9547);-webkit-text-stroke:0.22px currentColor;">2024</span>
<span class="t" style="left:287.30px;top:361px;font-size:8.30px;line-height:10px;color:#111;transform:scaleX(0.9547);-webkit-text-stroke:0.22px currentColor;">1613</span>
<span class="t" style="left:321.40px;top:361px;font-size:8.30px;line-height:10px;color:#111;transform:scaleX(0.9547);-webkit-text-stroke:0.22px currentColor;">1</span>
<span class="t" style="left:423.10px;top:361px;font-size:8.30px;line-height:10px;color:#111;transform:scaleX(0.8625);-webkit-text-stroke:0.22px currentColor;">TEM...</span>
<span class="t" style="left:457.30px;top:361px;font-size:8.30px;line-height:10px;color:#111;transform:scaleX(0.9378);-webkit-text-stroke:0.22px currentColor;">400,00</span>
<span class="t" style="left:559.40px;top:361px;font-size:8.30px;line-height:10px;color:#111;transform:scaleX(0.8927);-webkit-text-stroke:0.22px currentColor;">26.07...</span>
<span class="t" style="left:593.50px;top:361px;font-size:8.30px;line-height:10px;color:#111;transform:scaleX(0.9251);-webkit-text-stroke:0.22px currentColor;">Tem...</span>
<span class="t" style="left:627.50px;top:361px;font-size:8.30px;line-height:10px;color:#111;transform:scaleX(0.9547);-webkit-text-stroke:0.22px currentColor;">2024</span>
<span class="t" style="left:287.30px;top:376px;font-size:8.30px;line-height:10px;color:#111;transform:scaleX(0.9547);-webkit-text-stroke:0.22px currentColor;">1612</span>
<span class="t" style="left:321.40px;top:376px;font-size:8.30px;line-height:10px;color:#111;transform:scaleX(0.9547);-webkit-text-stroke:0.22px currentColor;">1</span>
<span class="t" style="left:423.10px;top:376px;font-size:8.30px;line-height:10px;color:#111;transform:scaleX(0.8995);-webkit-text-stroke:0.22px currentColor;">HAZİ...</span>
<span class="t" style="left:457.30px;top:376px;font-size:8.30px;line-height:10px;color:#111;transform:scaleX(0.9378);-webkit-text-stroke:0.22px currentColor;">400,00</span>
<span class="t" style="left:559.40px;top:376px;font-size:8.30px;line-height:10px;color:#111;transform:scaleX(0.8927);-webkit-text-stroke:0.22px currentColor;">26.07...</span>
<span class="t" style="left:593.50px;top:376px;font-size:8.30px;line-height:10px;color:#111;transform:scaleX(0.9251);-webkit-text-stroke:0.22px currentColor;">Tem...</span>
<span class="t" style="left:627.50px;top:376px;font-size:8.30px;line-height:10px;color:#111;transform:scaleX(0.9547);-webkit-text-stroke:0.22px currentColor;">2024</span>
<span class="t" style="left:287.30px;top:390px;font-size:8.30px;line-height:10px;color:#111;transform:scaleX(0.9547);-webkit-text-stroke:0.22px currentColor;">1481</span>
<span class="t" style="left:321.40px;top:390px;font-size:8.30px;line-height:10px;color:#111;transform:scaleX(0.9547);-webkit-text-stroke:0.22px currentColor;">1</span>
<span class="t" style="left:423.10px;top:390px;font-size:8.30px;line-height:10px;color:#111;transform:scaleX(0.9263);-webkit-text-stroke:0.22px currentColor;">MAYI...</span>
<span class="t" style="left:457.30px;top:390px;font-size:8.30px;line-height:10px;color:#111;transform:scaleX(0.9378);-webkit-text-stroke:0.22px currentColor;">400,00</span>
<span class="t" style="left:559.40px;top:390px;font-size:8.30px;line-height:10px;color:#111;transform:scaleX(0.8927);-webkit-text-stroke:0.22px currentColor;">29.05...</span>
<span class="t" style="left:593.50px;top:390px;font-size:8.30px;line-height:10px;color:#111;transform:scaleX(0.9439);-webkit-text-stroke:0.22px currentColor;">Mayıs</span>
<span class="t" style="left:627.50px;top:390px;font-size:8.30px;line-height:10px;color:#111;transform:scaleX(0.9547);-webkit-text-stroke:0.22px currentColor;">2024</span>
<span class="t" style="left:287.30px;top:404px;font-size:8.30px;line-height:10px;color:#111;transform:scaleX(0.9547);-webkit-text-stroke:0.22px currentColor;">1410</span>
<span class="t" style="left:321.40px;top:404px;font-size:8.30px;line-height:10px;color:#111;transform:scaleX(0.9547);-webkit-text-stroke:0.22px currentColor;">1</span>
<span class="t" style="left:423.10px;top:404px;font-size:8.30px;line-height:10px;color:#111;transform:scaleX(0.8834);-webkit-text-stroke:0.22px currentColor;">NİSA...</span>
<span class="t" style="left:457.30px;top:404px;font-size:8.30px;line-height:10px;color:#111;transform:scaleX(0.9378);-webkit-text-stroke:0.22px currentColor;">400,00</span>
<span class="t" style="left:559.40px;top:404px;font-size:8.30px;line-height:10px;color:#111;transform:scaleX(0.8927);-webkit-text-stroke:0.22px currentColor;">28.04...</span>
<span class="t" style="left:593.50px;top:404px;font-size:8.30px;line-height:10px;color:#111;transform:scaleX(0.9587);-webkit-text-stroke:0.22px currentColor;">Nisan</span>
<span class="t" style="left:627.50px;top:404px;font-size:8.30px;line-height:10px;color:#111;transform:scaleX(0.9547);-webkit-text-stroke:0.22px currentColor;">2024</span>
<svg style="left:265.9px;top:265.60px" width="3" height="4.6" viewBox="0 0 3 4.6"><path d="M0 0L3 2.3L0 4.6Z" fill="#111"/></svg>
<svg style="left:350px;top:257px" width="65" height="158"><rect x="0.80" y="0.40" width="63.55" height="156.80" fill="#000"/></svg>
<svg style="left:659px;top:235px" width="10" height="179"><rect x="0.90" y="0.00" width="8.40" height="178.80" fill="#f0f0f0"/></svg>
<svg style="left:660px;top:245px" width="8" height="53"><rect x="0.20" y="0.00" width="7.60" height="52.50" fill="#cdcdcd"/></svg>
<svg style="left:661.1px;top:238.6px" width="5.6" height="3.4" viewBox="0 0 5.6 3.4"><path d="M0.4 3.0L2.8 0.6L5.2 3.0" stroke="#4a4a4a" stroke-width="1.05" fill="none"/></svg>
<svg style="left:661.1px;top:407.6px" width="5.6" height="3.4" viewBox="0 0 5.6 3.4"><path d="M0.4 0.4L2.8 2.8L5.2 0.4" stroke="#4a4a4a" stroke-width="1.05" fill="none"/></svg>
<svg style="left:261px;top:234px" width="409" height="2"><rect x="0.10" y="0.00" width="408.30" height="1.05" fill="#505050"/></svg>
<svg style="left:261px;top:234px" width="2" height="181"><rect x="0.10" y="0.00" width="1.05" height="180.80" fill="#505050"/></svg>
<svg style="left:261px;top:413px" width="409" height="2"><rect x="0.10" y="0.75" width="408.30" height="1.05" fill="#5c5c5c"/></svg>
<svg style="left:668px;top:234px" width="2" height="181"><rect x="0.35" y="0.00" width="1.05" height="180.80" fill="#5c5c5c"/></svg>
<svg style="left:689.6px;top:424.4px" width="4.4" height="4.4" viewBox="0 0 4.4 4.4"><g fill="#bdbdbd"><rect x="3.2" y="0.2" width="1" height="1"/><rect x="1.7" y="1.7" width="1" height="1"/><rect x="3.2" y="1.7" width="1" height="1"/><rect x="0.2" y="3.2" width="1" height="1"/><rect x="1.7" y="3.2" width="1" height="1"/><rect x="3.2" y="3.2" width="1" height="1"/></g></svg>
<div class="r" style="left:0.00px;top:585.00px;width:27.00px;height:1.00px;background:#9a9a9a;"></div>
<div class="r" style="left:27.00px;top:585.00px;width:161.00px;height:1.00px;background:#dcdcdc;"></div>
<div class="r" style="left:188.00px;top:585.00px;width:892.00px;height:1.00px;background:#9a9a9a;"></div>
</body></html>
